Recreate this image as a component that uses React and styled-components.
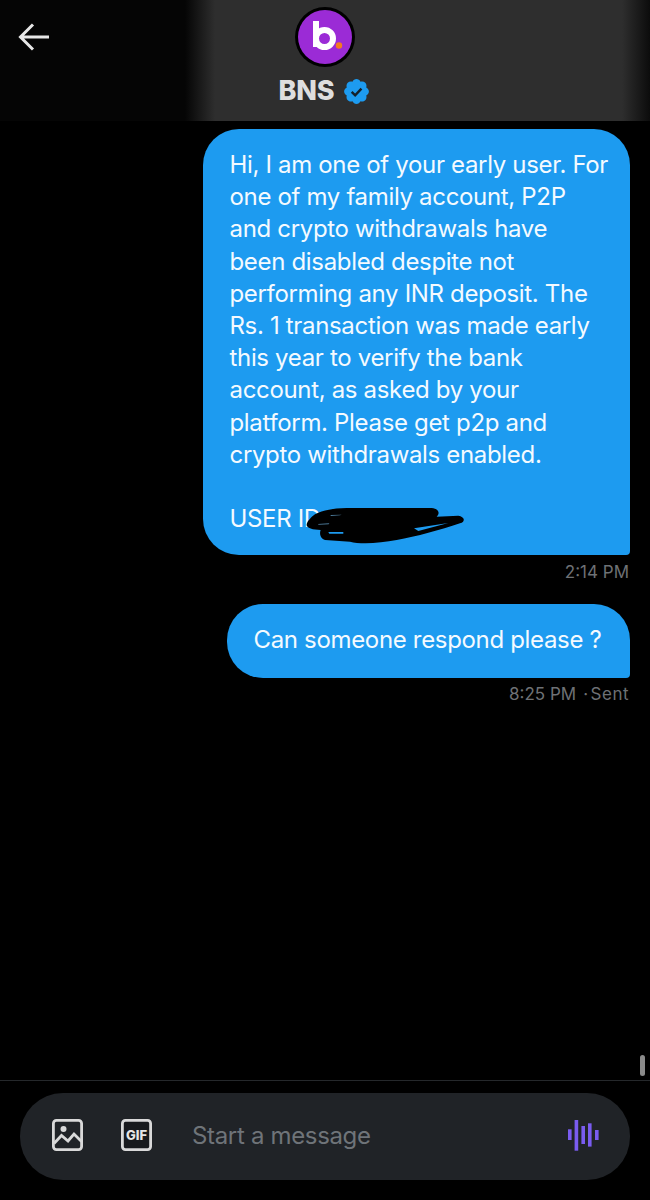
import styled, { createGlobalStyle } from 'styled-components';

const GlobalStyle = createGlobalStyle`
  html, body {
    margin: 0;
    background: #000;
  }
  body {
    font-family: "Inter", "Liberation Sans", sans-serif;
  }
`;

const Page = styled.div`
  width: 650px;
  height: 1200px;
  display: flex;
  flex-direction: column;
  background: #000;
  overflow: hidden;
`;

const Header = styled.header`
  height: 121px;
  flex: none;
  display: grid;
  grid-template-columns: 68px 1fr 68px;
  background: linear-gradient(90deg, #050505 0, #050505 185px, #2e2e2e 215px, #2e2e2e 622px, #0c0c0c 650px);
`;

const BackButton = styled.div`
  padding: 22px 0 0 18px;
  svg { display: block; }
`;

const Profile = styled.div`
  display: flex;
  flex-direction: column;
  align-items: center;
  padding-top: 7px;
`;

const Avatar = styled.svg`
  display: block;
`;

const NameRow = styled.div`
  display: flex;
  align-items: center;
  gap: 8px;
  margin-top: 8px;
  font-size: 27px;
  line-height: 32px;
  font-weight: 800;
  letter-spacing: -0.2px;
  color: #dedede;
`;

const Thread = styled.main`
  flex: 1;
  display: flex;
  flex-direction: column;
  align-items: flex-end;
  padding: 8px 20px 0 0;
  position: relative;
`;

const Bubble = styled.div`
  position: relative;
  box-sizing: border-box;
  width: ${(p) => p.$width}px;
  padding: ${(p) => p.$pad};
  background: #1d9bf0;
  color: #f4faff;
  border-radius: 36px 36px 4px 36px;
  font-size: 24px;
  line-height: 32.2px;
  letter-spacing: -0.33px;
  white-space: pre-line;
`;

const Redaction = styled.svg`
  position: absolute;
  left: 87px;
  bottom: 0;
`;

const Meta = styled.div`
  margin: ${(p) => p.$top}px 1px ${(p) => p.$bottom}px 0;
  font-size: 17px;
  line-height: 24px;
  color: #6e7175;
`;

const MetaStatus = styled.span`
  margin-left: 7px;
  letter-spacing: 0.5px;
`;

const MetaDot = styled.span`
  margin-right: 2px;
`;

const ScrollThumb = styled.div`
  position: absolute;
  right: 5px;
  top: 934px;
  width: 5px;
  height: 21px;
  border-radius: 3px;
  background: #8a8a8a;
`;

const Composer = styled.footer`
  flex: none;
  height: 120px;
  box-sizing: border-box;
  border-top: 1px solid #25282b;
  padding: 12px 20px 0;
`;

const InputBar = styled.div`
  height: 87px;
  box-sizing: border-box;
  border-radius: 43px;
  background: #202327;
  display: flex;
  align-items: center;
  padding: 0 31px 3px 32px;
`;

const IconSlot = styled.div`
  display: flex;
  margin-right: ${(p) => p.$gap}px;
`;

const Placeholder = styled.div`
  flex: 1;
  font-size: 24px;
  color: #6f7479;
  letter-spacing: -0.33px;
`;

const message = `Hi, I am one of your early user. For
one of my family account, P2P
and crypto withdrawals have
been disabled despite not
performing any INR deposit. The
Rs. 1 transaction was made early
this year to verify the bank
account, as asked by your
platform. Please get p2p and
crypto withdrawals enabled.

USER ID`;

export default function App() {
  return (
    <Page>
      <GlobalStyle />
      <Header>
        <BackButton>
          <svg width="32" height="30" viewBox="0 0 32 30" fill="none" stroke="#e7e7e7" strokeWidth="3">
            <path d="M31 15H3M15 2.5 2.5 15 15 27.5" />
          </svg>
        </BackButton>
        <Profile>
          <Avatar width="60" height="60" viewBox="0 0 60 60">
            <circle cx="30" cy="30" r="30" fill="#000" />
            <circle cx="30" cy="30" r="27" fill="#9b2bd6" />
            <path fill="none" stroke="#fff" strokeWidth="6" d="M21 14v26" />
            <circle cx="29.5" cy="31.5" r="8.5" fill="none" stroke="#fff" strokeWidth="6" />
            <circle cx="44" cy="38.5" r="3.2" fill="#f47a20" />
          </Avatar>
          <NameRow>
            BNS
            <svg width="29" height="29" viewBox="0 0 24 24">
              <path fill="#1d9bf0" d="M22.25 12c0-1.43-.88-2.67-2.19-3.34.46-1.39.2-2.9-.81-3.91s-2.52-1.27-3.91-.81C14.67 2.63 13.43 1.75 12 1.75s-2.67.88-3.33 2.19c-1.4-.46-2.91-.2-3.92.81s-1.26 2.52-.8 3.91C2.63 9.33 1.75 10.57 1.75 12s.88 2.67 2.2 3.34c-.46 1.39-.21 2.9.8 3.91s2.52 1.26 3.91.81c.67 1.31 1.91 2.19 3.34 2.19s2.68-.88 3.34-2.19c1.39.45 2.9.2 3.91-.81s1.27-2.52.81-3.91c1.31-.67 2.19-1.91 2.19-3.34z" />
              <path fill="none" stroke="#14202b" strokeWidth="2" d="M8 12.3l2.9 2.9 5.2-5.6" />
            </svg>
          </NameRow>
        </Profile>
      </Header>

      <Thread>
        <Bubble $width={427} $pad="20px 20px 20px 26.5px">
          {message}
          <Redaction width="190" height="60" viewBox="0 0 570 180">
            <path
              fill="#000"
              d="M75 58C100 45 130 40 170 39L425 39C445 40 452 55 440 65L505 62C525 65 527 80 510 85C450 105 380 125 320 135C270 145 210 148 180 140L105 135C90 130 88 115 92 105C70 105 48 100 50 88C52 78 65 65 75 58Z"
            />
            <path fill="#1d9bf0" d="M372 100L475 84 385 108Z" />
            <path fill="#4f7f9f" d="M122 60L155 59 150 61 122 63ZM84 87L118 85 116 88 86 89Z" />
            <path fill="#1d9bf0" d="M115 111L160 111 160 116 118 116Z" />
          </Redaction>
        </Bubble>
        <Meta $top={5} $bottom={20}>2:14 PM</Meta>
        <Bubble $width={403} $pad="20px 27px 21px 26.5px">Can someone respond please ?</Bubble>
        <Meta $top={4} $bottom={0}>
          8:25 PM
          <MetaStatus><MetaDot>·</MetaDot>Sent</MetaStatus>
        </Meta>
        <ScrollThumb />
      </Thread>

      <Composer>
        <InputBar>
          <IconSlot $gap={38}>
            <svg width="31" height="32" viewBox="0 0 31 32" fill="none" stroke="#d9d9d9" strokeWidth="2.8">
              <rect x="1.4" y="1.4" width="28.2" height="29.2" rx="3" />
              <circle cx="11.5" cy="10" r="3" fill="#d9d9d9" stroke="none" />
              <path d="M2 24.5l7.5-8 6.5 5.5 6-7 7.5 7.5" />
            </svg>
          </IconSlot>
          <IconSlot $gap={40}>
            <svg width="31" height="32" viewBox="0 0 31 32">
              <rect x="1.4" y="1.4" width="28.2" height="29.2" rx="3" fill="#181a1d" stroke="#d9d9d9" strokeWidth="2.8" />
              <text x="15.5" y="20.8" textAnchor="middle" fontSize="13" fontWeight="800" fontFamily="Inter, sans-serif" fill="#e6e6e6">GIF</text>
            </svg>
          </IconSlot>
          <Placeholder>Start a message</Placeholder>
          <svg width="31" height="31" viewBox="0 0 31 31" fill="#7a5cf0">
            <rect x="0" y="9.3" width="3.6" height="10.7" />
            <rect x="6.6" y="0" width="3.6" height="30.7" />
            <rect x="13.4" y="6" width="3.6" height="18" />
            <rect x="20" y="3.3" width="3.6" height="23.3" />
            <rect x="27" y="10" width="3.6" height="10" />
          </svg>
        </InputBar>
      </Composer>
    </Page>
  );
}
